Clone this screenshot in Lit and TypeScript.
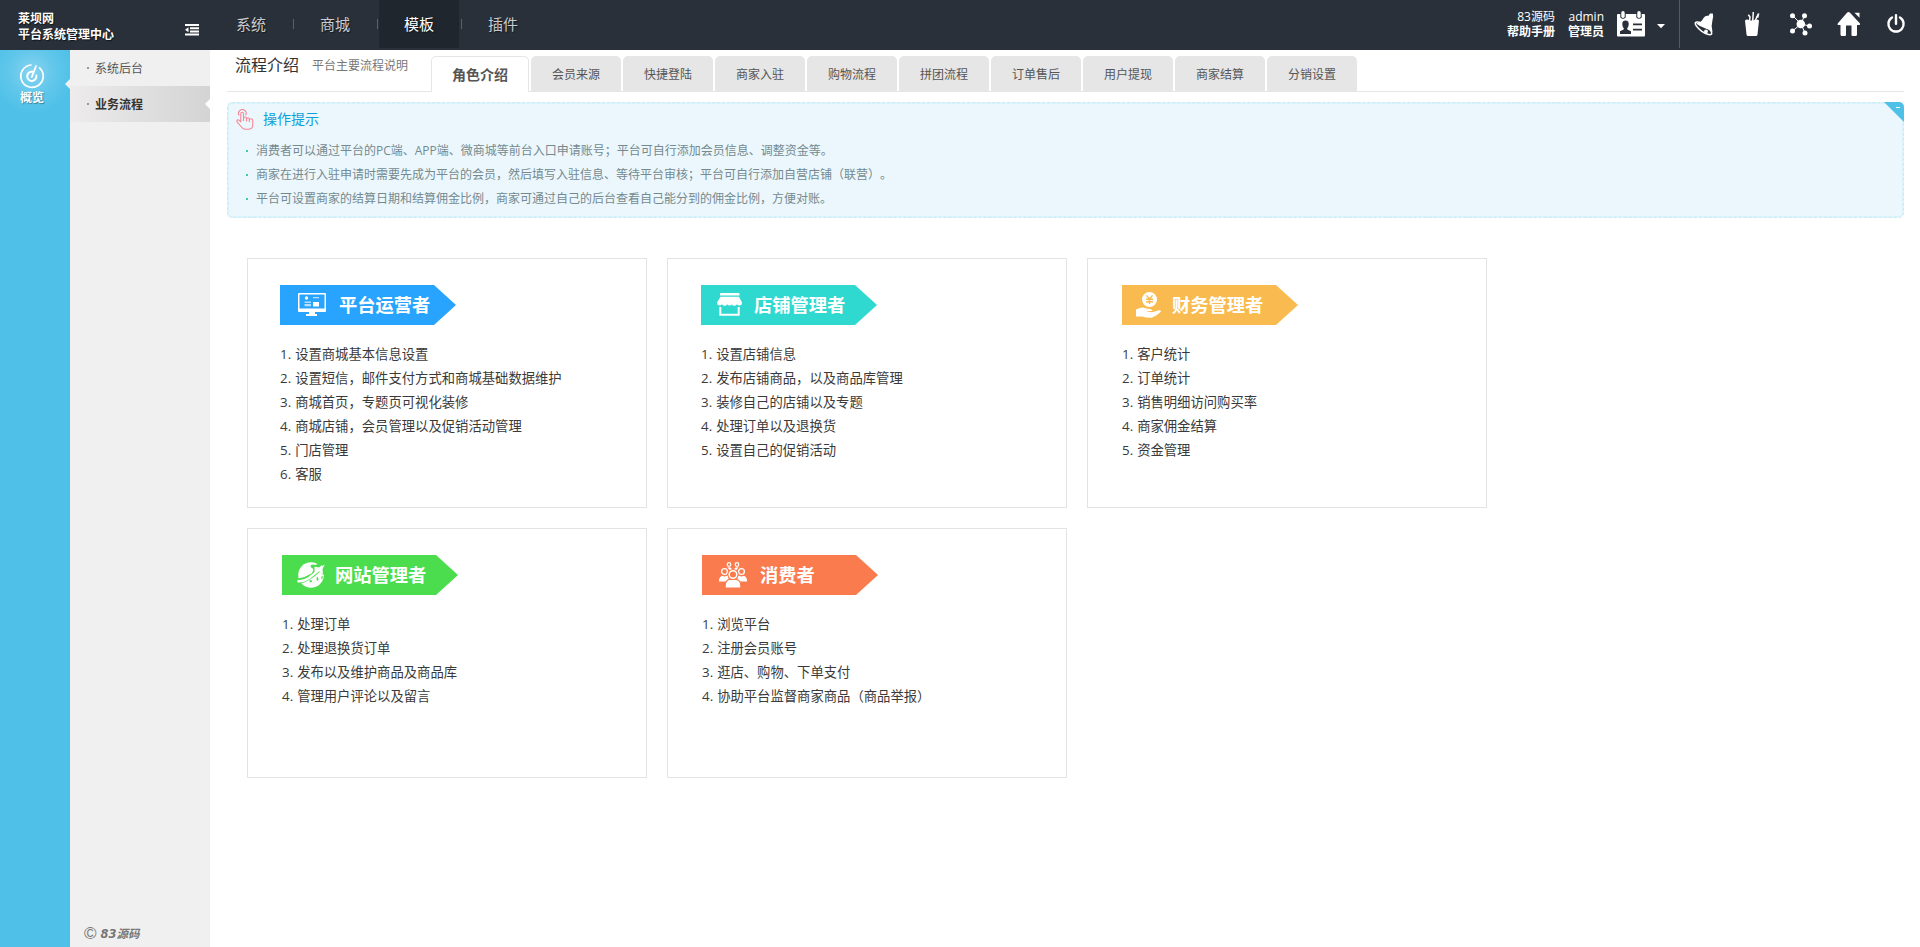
import { LitElement, html, css, TemplateResult } from "lit";
import { customElement, property } from "lit/decorators.js";
import { classMap } from "lit/directives/class-map.js";
import { styleMap } from "lit/directives/style-map.js";

interface Role {
  title: string;
  color: string;
  inset: number;
  iconGap: number;
  titleGap: number;
  icon: TemplateResult;
  steps: string[];
}

const FONT = css`"Open Sans", "Noto Sans CJK SC", sans-serif`;

const monitorIcon = html`<svg width="28" height="24" viewBox="0 0 28 24">
  <path fill="#fff" fill-rule="evenodd" d="M1 0H27Q28 0 28 1V18Q28 19 27 19H17V21H19V23H8V21H11V19H1Q0 19 0 18V1Q0 0 1 0ZM1.500 1.500V15.500H26.500V1.500Z"/>
  <circle cx="8.500" cy="5" r="1.700" fill="#fff"/>
  <path fill="#fff" d="M15 9h6v4.500h-6z"/>
  <path fill="#fff" opacity=".65" d="M15 4h6v1.200h-6zM6.500 8.500h6.500v1.500h-6.500zM6.500 11h6.500v2.300h-6.500z"/>
</svg>`;

const shopIcon = html`<svg width="25" height="24" viewBox="0 0 25 24">
  <path fill="#fff" d="M4 0H21.500Q22.500 0 22.500 1V2.500H3V1Q3 0 4 0ZM3.500 3.800H22L25 9.500Q25 12.500 22.500 12.500 21 12.500 20 11.300 19 12.800 17.200 12.800 15.500 12.800 14.800 11.300 14 12.500 12.500 12.500 11 12.500 10.200 11.300 9.300 12.800 7.700 12.800 6 12.800 5 11.300 4 12.500 2.500 12.500 0 12.500 0 9.500Z"/>
  <path fill="none" stroke="#fff" stroke-width="2" d="M3.300 14V21.800H21.700V14"/>
</svg>`;

const moneyIcon = html`<svg width="25" height="26" viewBox="0 0 25 26">
  <circle cx="13.500" cy="7.500" r="7.500" fill="#fff"/>
  <path fill="none" stroke="#f9bb4f" stroke-width="1.400" d="M10.400 3.400 13.500 7 16.600 3.400M13.500 7V12M10 7.300H17M10 9.700H17"/>
  <path fill="#fff" d="M0 17.500Q4 15.500 7 15.500 10 16.800 14 17 16.500 17.300 16.500 19H10.500Q13 20.500 17 20L23 18.200Q25 18 25 19.500 20 24.500 15.500 25.700 11 26 6 24.500H0Z"/>
</svg>`;

const globeIcon = html`<svg width="28" height="26" viewBox="0 0 28 26">
  <circle cx="14" cy="13" r="12.800" fill="#fff"/>
  <path fill="#4bdd4d" d="M1 16.500Q9 15 14.500 11.500 17 8 16 6.500 14 6.500 13.500 3.500 15.500 2 18.500 3 20.500 2.500 22 0H28V11.500L25.500 13 23 9.500Q14 18.500 3.500 21.800L0 21Z"/>
  <path fill="#4bdd4d" d="M12 18.800 14.500 18 15 20 13.500 20.500ZM20 14.500 21.500 16.500 21 19 19.500 18ZM24 15 26 14 25 18Z"/>
  <path fill="none" stroke="#fff" stroke-width="2.400" d="M.5 19Q6 20 12 16 19 11 25.500 4.200"/>
  <path fill="#fff" d="M17.500 4.800 22.500 5.500 27.800 2.500 25.500 7 26 13 22 9 17.500 12Z"/>
</svg>`;

const crowdIcon = html`<svg width="28" height="26" viewBox="0 0 28 26">
  <path fill="#fff" d="M6.800 8Q7 5.300 10 5.300 12.500 5.300 13 7.500H15Q15.500 5.300 18 5.300 21 5.300 21.200 8Z"/>
  <g fill="#f97b4e" stroke="#fff" stroke-width="1.200">
    <circle cx="10" cy="2.500" r="1.800"/><circle cx="18" cy="2.500" r="1.800"/>
  </g>
  <path fill="#fff" d="M0 19.500Q-.2 14.300 4 13.500H9.500V19.500ZM28 19.500Q28.200 14.300 24 13.500H18.500V19.500Z"/>
  <g fill="#f97b4e" stroke="#f97b4e" stroke-width="1.500"><circle cx="5.500" cy="9.500" r="4.200"/><circle cx="22.500" cy="9.500" r="4.200"/></g>
  <g fill="#f97b4e" stroke="#fff" stroke-width="1.300"><circle cx="5.500" cy="9.500" r="2.900"/><circle cx="22.500" cy="9.500" r="2.900"/></g>
  <circle cx="14" cy="12.500" r="5.600" fill="#f97b4e"/>
  <path fill="#fff" stroke="#f97b4e" stroke-width="1.200" d="M6.200 26Q5.500 18 11 17.400H17Q22.500 18 21.800 26Z"/>
  <circle cx="14" cy="12.500" r="3.800" fill="#f97b4e" stroke="#fff" stroke-width="1.500"/>
</svg>`;

const ROLES: Role[] = [
  {
    title: "平台运营者", color: "#28a4ff", inset: 32, iconGap: 18, titleGap: 13, icon: monitorIcon,
    steps: ["设置商城基本信息设置", "设置短信，邮件支付方式和商城基础数据维护", "商城首页，专题页可视化装修", "商城店铺，会员管理以及促销活动管理", "门店管理", "客服"],
  },
  {
    title: "店铺管理者", color: "#2fd9cf", inset: 33, iconGap: 16, titleGap: 12, icon: shopIcon,
    steps: ["设置店铺信息", "发布店铺商品，以及商品库管理", "装修自己的店铺以及专题", "处理订单以及退换货", "设置自己的促销活动"],
  },
  {
    title: "财务管理者", color: "#f9bb4f", inset: 34, iconGap: 14, titleGap: 11, icon: moneyIcon,
    steps: ["客户统计", "订单统计", "销售明细访问购买率", "商家佣金结算", "资金管理"],
  },
  {
    title: "网站管理者", color: "#4bdd4d", inset: 34, iconGap: 15, titleGap: 10, icon: globeIcon,
    steps: ["处理订单", "处理退换货订单", "发布以及维护商品及商品库", "管理用户评论以及留言"],
  },
  {
    title: "消费者", color: "#f97b4e", inset: 34, iconGap: 17, titleGap: 13, icon: crowdIcon,
    steps: ["浏览平台", "注册会员账号", "逛店、购物、下单支付", "协助平台监督商家商品（商品举报）"],
  },
];

@customElement("top-bar")
class TopBar extends LitElement {
  static styles = css`
    :host { display: flex; height: 50px; background: #2a3039; color: #fff; font: 12px/16px ${FONT}; }
    .brand { width: 167px; padding: 11px 0 0 18px; font-weight: 700; text-shadow: 1px 1px 1px rgba(0,0,0,.6); }
    .fold { width: 14px; margin: 24px 12px 0 0; height: 12px; flex: none; }
    nav { display: flex; }
    .link { width: 80px; height: 48px; margin-right: 4px; position: relative; line-height: 49px; text-align: center; font-size: 15px; color: #c9cbce; text-shadow: 1px 1px 1px rgba(0,0,0,.5); }
    .link + .link::before { content: ""; position: absolute; left: -2px; top: 19px; width: 1px; height: 10px; background: #5c6269; }
    .link.on { background: #20262e; color: #fff; }
    .spacer { flex: 1; }
    .pair { text-align: right; padding-top: 9px; margin-right: 13px; line-height: 15px; }
    .pair b { display: block; }
    .idcard { margin: 11px 12px 0 0; flex: none; height: 26px; }
    .caret { width: 8px; height: 5px; margin-top: 24px; }
    .tools { width: 240px; height: 48px; margin-left: 14px; border-left: 1px solid #565b63; display: flex; }
    .tool { width: 48px; height: 48px; display: flex; align-items: center; justify-content: center; }
    .tool.wide { width: 50px; }
    .tool.narrow { width: 46px; }
  `;
  render() {
    return html`
      <div class="brand">莱坝网<br>平台系统管理中心</div>
      <svg class="fold" viewBox="0 0 14 12"><path fill="#fff" d="M0 0h14v2H0zM5 3.300h9v2H5zM5 6.500h9v2H5zM0 9.500h14v2H0zM0 5.800 3.500 3.300V8.300Z"/></svg>
      <nav>${["系统", "商城", "模板", "插件"].map((t) => html`<div class=${classMap({ link: true, on: t === "模板" })}>${t}</div>`)}</nav>
      <div class="spacer"></div>
      <div class="pair">83源码<b>帮助手册</b></div>
      <div class="pair">admin<b>管理员</b></div>
      <svg class="idcard" width="28" height="26" viewBox="0 0 28 26">
        <path fill="#fff" d="M1 3H27Q28 3 28 4V24.500Q28 25.500 27 25.500H1Q0 25.500 0 24.500V4Q0 3 1 3Z"/>
        <path fill="#2a3039" d="M3.300 2.500h5.400v4q-2.700 2.500-5.400 0zM19.300 2.500h5.400v4q-2.700 2.500-5.400 0z"/>
        <rect x="4.300" y="0" width="3.400" height="7" rx="1.700" fill="#fff"/><rect x="20.300" y="0" width="3.400" height="7" rx="1.700" fill="#fff"/>
        <path fill="#2a3039" d="M8.500 9.500Q12 9.500 11.700 13.500 11.500 16 10.300 17V18.500L14 20.300V23H3V20.300L6.700 18.500V17Q5.500 16 5.300 13.500 5 9.500 8.500 9.500ZM16 12.500h9v1.800h-9zM16 17.800h9v1.800h-9z"/>
      </svg>
      <svg class="caret" viewBox="0 0 8 5"><path fill="#fff" d="M0 0H8L4 4.200Z"/></svg>
      <div class="tools">
        <div class="tool"><svg width="24" height="24" viewBox="0 0 24 24">
          <ellipse cx="11.500" cy="16.300" rx="9.800" ry="3.400" transform="rotate(36 11.500 16.300)" fill="none" stroke="#fff" stroke-width="1.500"/>
          <path fill="#fff" d="M4 11.500Q9.500 10.500 11.500 6 13.500 3 16.500 3.800L18 1.500 20.800 1.500 21.200 4.500 20.500 8Q18.800 14 20.500 20 17 17.500 12.500 16 8 14.500 4 11.500Z"/>
          <circle cx="14" cy="19.500" r="1.900" fill="#fff"/>
        </svg></div>
        <div class="tool"><svg width="24" height="24" viewBox="0 0 24 24">
          <path fill="#fff" d="M5 8.500Q6.500 6.800 9 8 12 9.300 15 7.800 17.500 6.800 19 8.500L17.500 22.500Q17.300 24 16 24H8Q6.700 24 6.500 22.500Z"/>
          <path fill="none" stroke="#fff" stroke-width="1.500" d="M9.500 9 10 5 8.300 2.800M12.700 9.500 13.300 0M15 9 18.500 1.500"/>
          <path fill="#fff" d="M16 5 19.500 1 18.300 6Z"/>
        </svg></div>
        <div class="tool wide"><svg width="24" height="24" viewBox="0 0 24 24">
          <path stroke="#fff" stroke-width="1" d="M12 12 3.500 3.500M12 12 15.500 3.500M12 12 3.500 19M12 12 16 21M12 12 20.500 14"/>
          <g fill="#fff"><circle cx="11.800" cy="12" r="4.300"/><circle cx="3.500" cy="3.700" r="2.500"/><circle cx="15.500" cy="3.700" r="2.500"/><circle cx="3.500" cy="19" r="2.500"/><circle cx="16" cy="21" r="2.500"/><circle cx="20.500" cy="14" r="2.500"/></g>
        </svg></div>
        <div class="tool narrow"><svg width="24" height="24" viewBox="0 0 24 24">
          <path fill="#fff" d="M11.500 0Q12.300 0 13 .7L23 11.500Q23.500 13 22 13H20V22.500Q20 24 18.500 24H15.500Q14.500 24 14.500 23V13.500H9V23Q9 24 8 24H5Q3.500 24 3.500 22.500V13H1.500Q0 13 .7 11.500L10 .7Q10.700 0 11.500 0ZM17.500 .8H22.500V5.800Z"/>
        </svg></div>
        <div class="tool"><svg width="20" height="22" viewBox="0 0 20 22">
          <path fill="none" stroke="#fff" stroke-width="2.400" stroke-linecap="round" d="M6 4.500A7.600 7.600 0 1 0 14 4.500M10 2.300V10.800"/>
        </svg></div>
      </div>`;
  }
}

@customElement("side-menu")
class SideMenu extends LitElement {
  static styles = css`
    :host { display: flex; width: 210px; font: 12px/36px ${FONT}; }
    .rail { width: 70px; background: radial-gradient(circle at 32px 22px, #88d4f0 0, #62c7eb 22px, #4fc0e8 42px); position: relative; }
    .module { width: 64px; padding-top: 13px; display: flex; flex-direction: column; align-items: center; color: #fff; font-weight: 700; line-height: 18px; text-shadow: 1px 1px 1px rgba(0,0,0,.35); }
    .rail::after { content: ""; position: absolute; right: 0; top: 29px; border: solid transparent; border-width: 5px 5px 5px 0; border-right-color: #f0f0f0; }
    .list { width: 140px; background: #f0f0f0; display: flex; flex-direction: column; }
    .item { height: 36px; padding-left: 17px; display: flex; align-items: center; gap: 6px; color: #555; position: relative; line-height: 37px; }
    .item::before { content: ""; width: 2px; height: 2px; background: #999; }
    .item.on { background: linear-gradient(90deg, #edebec, #d4d4d4); color: #333; font-weight: 700; }
    .item.on::after { content: ""; position: absolute; right: 0; top: 13px; border: solid transparent; border-width: 5px 5px 5px 0; border-right-color: #fff; }
    .copy { margin-top: auto; height: 27px; padding-left: 14px; display: flex; align-items: center; gap: 4px; color: #777; line-height: 20px; }
    .mark { font: 17px/20px "Liberation Sans", sans-serif; }
    .owner { font: italic 700 11.500px/20px "DejaVu Sans", "Noto Sans CJK SC", sans-serif; padding-top: 1px; }
  `;
  render() {
    return html`
      <div class="rail"><div class="module">
        <svg width="26" height="26" viewBox="0 0 26 26" fill="none" stroke="#fff" stroke-width="2" stroke-linecap="round">
          <path d="M12 2A11.200 11.200 0 1 0 20.500 4.800" stroke-width="1.700"/>
          <path d="M13.500 8.800A4.600 4.600 0 1 0 17.300 12.500"/><path d="M12.800 14 17 3" stroke-width="1.800"/>
        </svg>概览</div></div>
      <div class="list">
        <div class="item">系统后台</div>
        <div class="item on">业务流程</div>
        <div class="copy"><span class="mark">©</span><span class="owner">83源码</span></div>
      </div>`;
  }
}

@customElement("role-card")
class RoleCard extends LitElement {
  @property({ attribute: false }) role!: Role;
  static styles = css`
    :host { display: block; box-sizing: border-box; height: 250px; border: 1px solid #e3e3e3; background: #fff; padding-top: 26px; }
    .inner { margin-left: var(--inset); }
    .banner { width: 176px; height: 40px; display: flex; align-items: center; box-sizing: border-box; padding-left: var(--icon-gap); gap: var(--title-gap); background: var(--tone); clip-path: polygon(0 0, 154px 0, 100% 50%, 154px 100%, 0 100%); }
    .name { color: #fff; font: 700 18.300px/40px ${FONT}; white-space: nowrap; }
    .steps { margin-top: 17px; font: 13.330px/24px ${FONT}; color: #3a3a3a; text-spacing-trim: space-all; }
    .step { display: flex; gap: 4px; }
    svg { flex: none; }
  `;
  render() {
    const r = this.role;
    const vars = { "--inset": `${r.inset}px`, "--icon-gap": `${r.iconGap}px`, "--title-gap": `${r.titleGap}px`, "--tone": r.color };
    return html`<div class="inner" style=${styleMap(vars)}>
      <div class="banner">${r.icon}<span class="name">${r.title}</span></div>
      <div class="steps">${r.steps.map((s, i) => html`<div class="step"><span>${i + 1}.</span><span>${s}</span></div>`)}</div>
    </div>`;
  }
}

@customElement("app-root")
class AppRoot extends LitElement {
  static styles = css`
    :host { display: flex; flex-direction: column; height: 947px; overflow: hidden; background: #fff; font: 12px/24px ${FONT}; }
    .body { flex: 1; display: flex; min-height: 0; }
    main { flex: 1; padding: 0 16px 0 17px; }
    .head { height: 42px; box-sizing: border-box; border-bottom: 1px solid #e6e6e6; display: flex; align-items: flex-start; }
    .title { width: 196px; margin-right: 8px; flex: none; box-sizing: border-box; padding: 1px 0 0 8px; display: flex; gap: 13px; align-items: center; color: #777; white-space: nowrap; }
    .title b { font-size: 16px; font-weight: 400; color: #333; }
    .title span { padding-top: 3px; }
    .tabs { display: flex; gap: 2px; padding-top: 6px; }
    .tab { width: 90px; height: 36px; box-sizing: border-box; background: #e6e6e6; border-radius: 5px 5px 0 0; text-align: center; line-height: 38px; color: #555; }
    .tab.on { width: 98px; border: 1px solid #e6e6e6; border-bottom: 0; background: #fff; font-size: 14px; font-weight: 700; line-height: 36px; }
    .tips { position: relative; margin-top: 10px; height: 116px; box-sizing: border-box; border: 1px dashed #c8ebf6; box-shadow: inset 0 0 0 1px #daf2fa; border-radius: 5px; background: #ebf7fd; padding: 4px 0 0 8px; color: #748a8f; }
    .caption { display: flex; align-items: center; gap: 9px; height: 24px; font-size: 14px; color: #0ba0da; }
    ul { list-style: none; margin: 8px 0 0; padding: 0; text-spacing-trim: space-all; }
    .tip { display: flex; align-items: center; gap: 8px; padding-left: 10px; }
    .tip::before { content: ""; width: 2px; height: 2px; background: #3fc9a6; }
    .corner { position: absolute; right: -1px; top: -1px; width: 20px; height: 20px; border-top-right-radius: 5px; overflow: hidden; }
    .corner svg { display: block; }
    .roles { display: grid; grid-template-columns: repeat(3, 400px); gap: 20px; padding: 40px 0 0 20px; }
  `;
  render() {
    const tabs = ["角色介绍", "会员来源", "快捷登陆", "商家入驻", "购物流程", "拼团流程", "订单售后", "用户提现", "商家结算", "分销设置"];
    const tips = [
      "消费者可以通过平台的PC端、APP端、微商城等前台入口申请账号；平台可自行添加会员信息、调整资金等。",
      "商家在进行入驻申请时需要先成为平台的会员，然后填写入驻信息、等待平台审核；平台可自行添加自营店铺（联营）。",
      "平台可设置商家的结算日期和结算佣金比例，商家可通过自己的后台查看自己能分到的佣金比例，方便对账。",
    ];
    return html`
      <top-bar></top-bar>
      <div class="body">
        <side-menu></side-menu>
        <main>
          <div class="head">
            <div class="title"><b>流程介绍</b><span>平台主要流程说明</span></div>
            <div class="tabs">${tabs.map((t, i) => html`<div class=${classMap({ tab: true, on: i === 0 })}>${t}</div>`)}</div>
          </div>
          <section class="tips">
            <div class="caption">
              <svg width="18" height="21" viewBox="0 0 18 21" fill="none" stroke="#f78795" stroke-width="1.100" stroke-linejoin="round">
                <path d="M4.800 12.800V4.800Q4.800 3.300 6.200 3.300 7.500 3.300 7.500 4.800V9.500Q7.500 8 9 8 10.500 8 10.500 9.500V10Q10.500 8.800 12 8.800 13.300 9 13.300 10.500V11Q13.500 9.700 15 9.800 16.800 10 16.800 12V15.500Q17 20.300 12 20.300H9.500Q7 20.300 5.500 18L1 12.800Q.5 11 2 10.700 3 10.700 4.800 12.800ZM7.500 9.500V12M10.500 10V12.500M13.300 11V13"/>
                <path d="M3.200 6.500A3.800 3.800 0 1 1 9.500 6.500"/>
              </svg>操作提示
            </div>
            <ul>${tips.map((t) => html`<li class="tip">${t}</li>`)}</ul>
            <div class="corner"><svg width="20" height="20"><path fill="#4fc0e8" d="M0 0H20V20Z"/><path fill="#fff" d="M12 5h4v1h-4z"/></svg></div>
          </section>
          <section class="roles">${ROLES.map((r) => html`<role-card .role=${r}></role-card>`)}</section>
        </main>
      </div>`;
  }
}
